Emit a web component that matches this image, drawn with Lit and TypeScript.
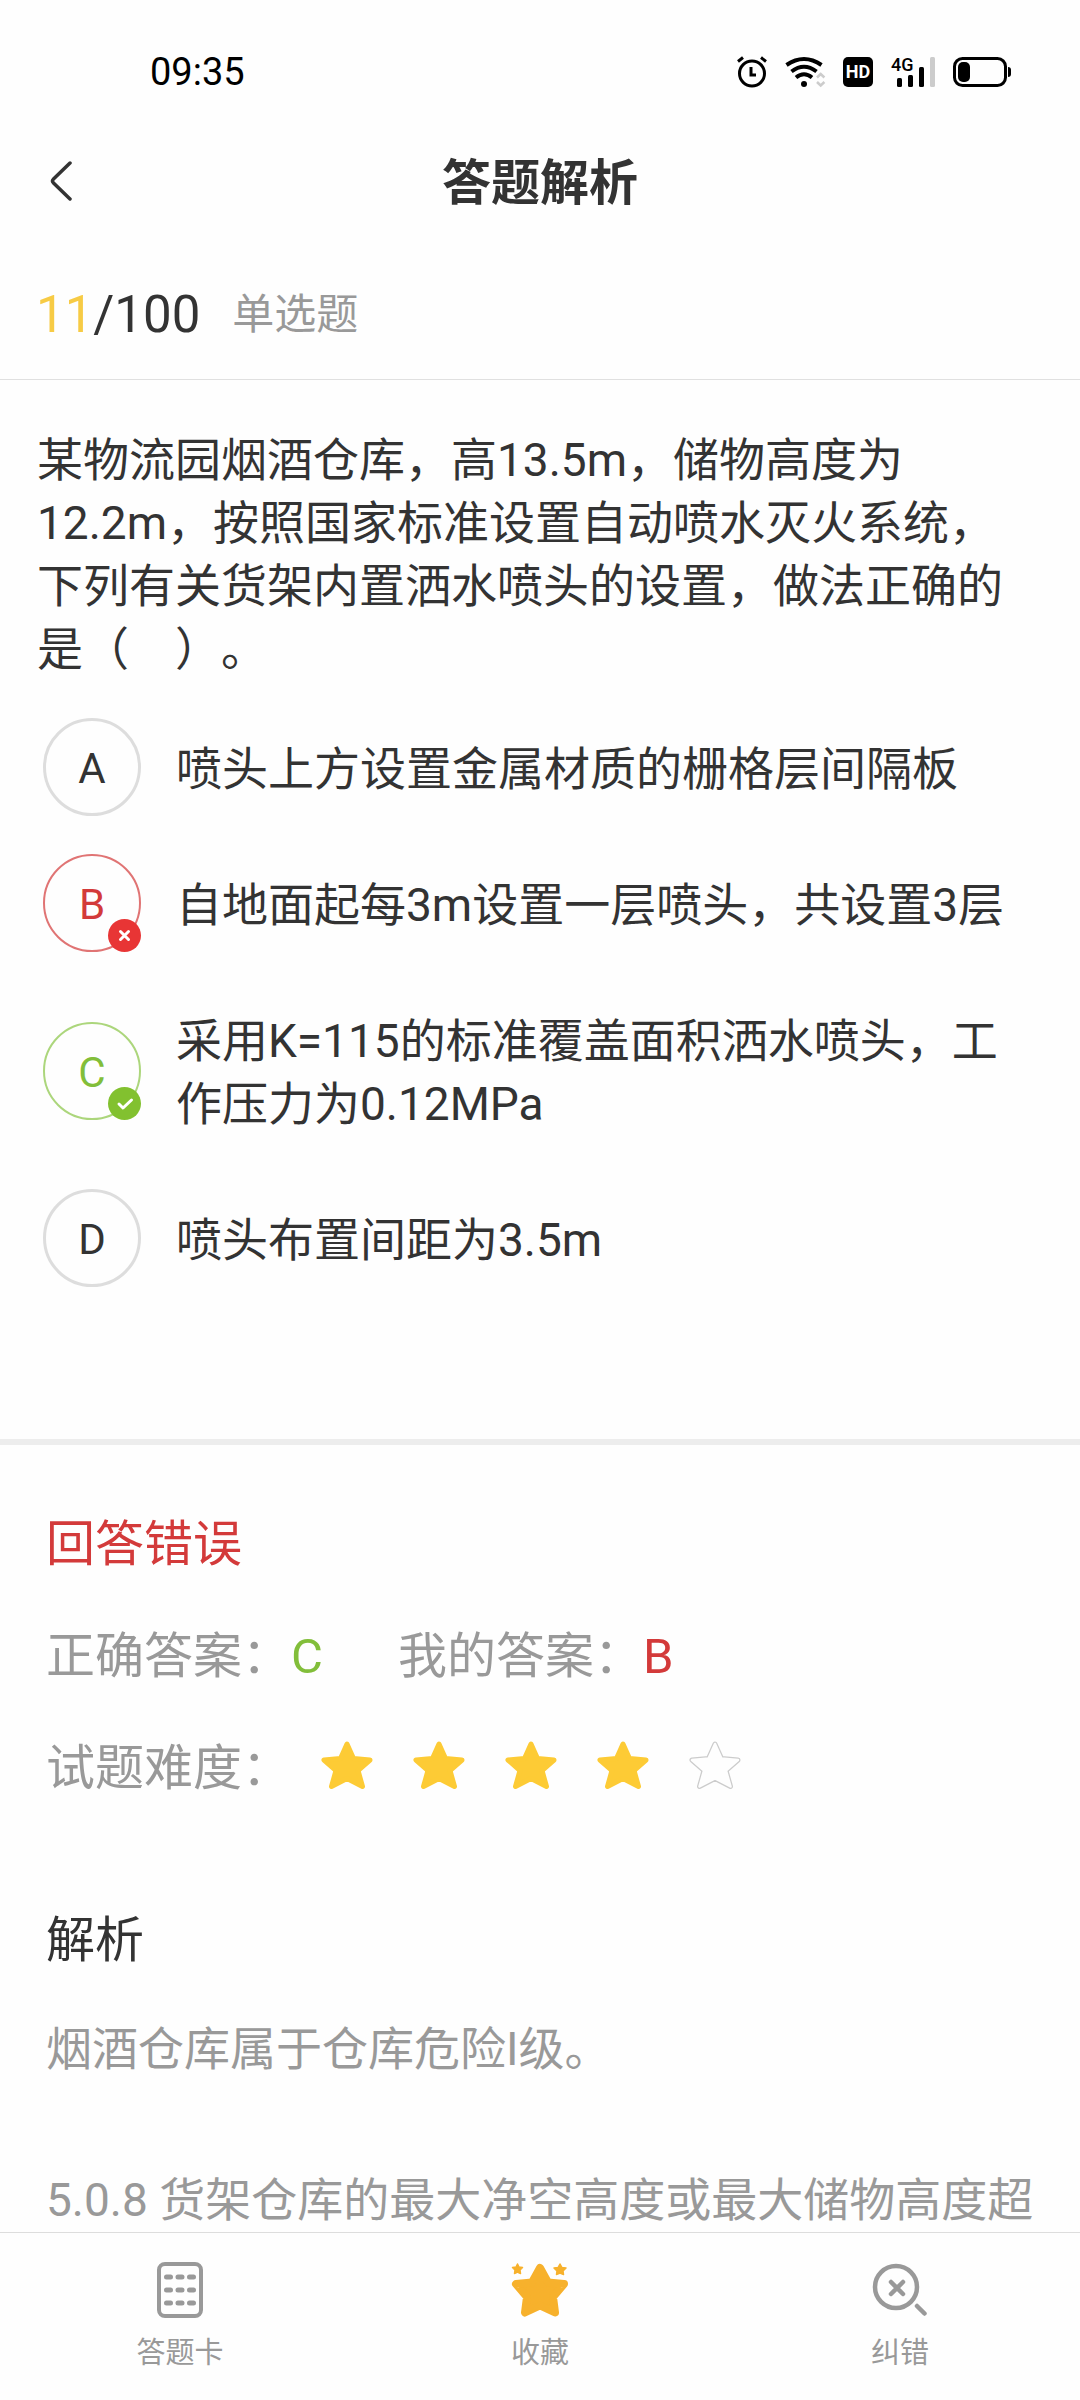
import { LitElement, html, css, svg, nothing } from "lit";
import { customElement, property } from "lit/decorators.js";
import { classMap } from "lit/directives/class-map.js";

type OptionState = "plain" | "wrong" | "right";

interface Option {
  key: string;
  text: string;
  state: OptionState;
}

const OPTIONS: Option[] = [
  { key: "A", text: "喷头上方设置金属材质的栅格层间隔板", state: "plain" },
  { key: "B", text: "自地面起每3m设置一层喷头，共设置3层", state: "wrong" },
  { key: "C", text: "采用K=115的标准覆盖面积洒水喷头，工作压力为0.12MPa", state: "right" },
  { key: "D", text: "喷头布置间距为3.5m", state: "plain" },
];

const STAR = "M25 3 L31.5 17.5 L48 19 L36 29.5 L40.5 45.5 L25 37.5 L9.5 45.5 L14 29.5 L2 19 L18.5 17.5 Z";

@customElement("status-bar")
export class StatusBar extends LitElement {
  static styles = css`
    :host {
      display: flex;
      align-items: center;
      justify-content: space-between;
      height: 144px;
      padding: 0 69px 0 150px;
      color: #000;
    }
    .time {
      font-size: 38px;
      line-height: 44px;
    }
    .icons {
      display: flex;
      align-items: center;
      gap: 18px;
    }
    svg {
      display: block;
      overflow: visible;
    }
    .hd {
      width: 30px;
      height: 30px;
      border-radius: 5px;
      background: #000;
      color: #fff;
      font: 700 18px/30px Roboto, sans-serif;
      text-align: center;
    }
    .net {
      font: 500 18px Roboto, sans-serif;
    }
  `;

  render() {
    return html`
      <span class="time">09:35</span>
      <div class="icons">
        <svg width="30" height="32" viewBox="0 0 30 32" fill="none" stroke="#000" stroke-width="3">
          <circle cx="15" cy="17.5" r="12.5" />
          <path d="M14 11v8h5M1 5.5l5-4M24 1.5l5 4" />
        </svg>
        <svg width="40" height="30" viewBox="0 0 40 30" fill="none" stroke="#000" stroke-width="4">
          <path d="M1.5 8Q19-4 36.5 8M6.5 14.5Q19 5 31.5 14.5M11 20.5Q19 14 27 20.5" />
          <circle cx="19" cy="27" r="3" fill="#000" stroke="none" />
          <path d="M32 20.5l3.7-3.5 3.7 3.5M32 25l3.7 3.5 3.7-3.5" stroke="#ccc" stroke-width="2.5" />
        </svg>
        <span class="hd">HD</span>
        <svg width="44" height="30" viewBox="0 0 44 30">
          <text class="net" x="0" y="14">4G</text>
          <rect x="6" y="21" width="5" height="9" rx="1.5" />
          <rect x="17" y="18" width="5" height="12" rx="1.5" />
          <rect x="28" y="10" width="5" height="20" rx="1.5" />
          <rect x="39" y="0" width="5" height="30" rx="1.5" fill="#ccc" />
        </svg>
        <svg width="58" height="30" viewBox="0 0 58 30">
          <rect x="1.5" y="1.5" width="51" height="27" rx="8" fill="none" stroke="#000" stroke-width="3" />
          <rect x="5" y="5" width="12" height="20" rx="5" />
          <path d="M55 10q3 0 3 3v4q0 3-3 3z" />
        </svg>
      </div>
    `;
  }
}

@customElement("answer-option")
export class AnswerOption extends LitElement {
  @property({ attribute: false }) option!: Option;

  static styles = css`
    :host {
      display: block;
    }
    .row {
      display: flex;
      align-items: center;
      gap: 35px;
      width: 100%;
      margin: 0;
      padding: 0;
      border: 0;
      background: none;
      color: inherit;
      font: inherit;
      text-align: left;
      cursor: pointer;
    }
    .mark {
      position: relative;
      flex: none;
      box-sizing: border-box;
      width: 98px;
      height: 98px;
      border: 3px solid #ddd;
      border-radius: 50%;
      font-size: 42px;
      line-height: 96px;
      text-align: center;
    }
    .wrong {
      border: 2px solid #e07474;
      color: #d33a3a;
      line-height: 98px;
    }
    .right {
      border: 2px solid #acd67c;
      color: #82be3a;
      line-height: 98px;
    }
    .badge {
      position: absolute;
      right: -2px;
      bottom: -2px;
      display: block;
    }
    .text {
      flex: 1;
      padding: 20px 0 15px;
    }
  `;

  private badge(state: OptionState) {
    if (state === "plain") return nothing;
    const wrong = state === "wrong";
    return html`
      <svg class="badge" width="33" height="33" viewBox="0 0 33 33" fill="none" stroke="#fff" stroke-width="3" stroke-linecap="round" stroke-linejoin="round">
        <circle cx="16.5" cy="16.5" r="16.5" fill=${wrong ? "#e83535" : "#82c12f"} stroke="none" />
        ${wrong
          ? svg`<path d="M12.5 12.5l8 8M20.5 12.5l-8 8" />`
          : svg`<path d="M11 17l4 4 8.5-8" />`}
      </svg>
    `;
  }

  render() {
    const { key, text, state } = this.option;
    return html`
      <button class="row" type="button">
        <span class=${classMap({ mark: true, wrong: state === "wrong", right: state === "right" })}>${key}${this.badge(state)}</span>
        <span class="text">${text}</span>
      </button>
    `;
  }
}

@customElement("app-root")
export class AppRoot extends LitElement {
  static styles = css`
    :host {
      display: flex;
      flex-direction: column;
      min-height: 100vh;
      background: #fefefe;
      color: #333;
      font-family: Roboto, "Noto Sans CJK SC", sans-serif;
      font-size: 46px;
      line-height: 63px;
      text-spacing-trim: space-all;
    }
    svg {
      display: block;
    }
    button {
      margin: 0;
      padding: 0;
      border: 0;
      background: none;
      color: inherit;
      font: inherit;
      cursor: pointer;
    }
    h1,
    h2,
    p,
    ol,
    dl,
    dd {
      margin: 0;
      padding: 0;
    }
    .nav {
      display: grid;
      grid-template-columns: 74px 1fr 74px;
      align-items: center;
      height: 74px;
      padding: 0 24px;
    }
    .back {
      display: flex;
      align-items: center;
      justify-content: center;
      height: 74px;
    }
    .title {
      padding-top: 4px;
      font-size: 49px;
      font-weight: 700;
      text-align: center;
    }
    .progress {
      display: flex;
      align-items: center;
      gap: 32px;
      margin-top: 32px;
      padding: 33px 36px;
      border-bottom: 1px solid #e0e0e0;
    }
    .count {
      font-size: 51px;
    }
    .current {
      color: #f7cb45;
    }
    .kind {
      color: #999;
      font-size: 42px;
    }
    .question {
      padding: 49px 45px 37px 37px;
    }
    .options {
      display: flex;
      flex-direction: column;
      gap: 38px;
      padding: 0 37px 152px 43px;
      border-bottom: 6px solid #ededed;
      list-style: none;
    }
    .result {
      display: flex;
      flex-direction: column;
      gap: 49px;
      padding: 68px 46px 0;
      color: #999;
      font-size: 49px;
    }
    .verdict,
    .bad {
      color: #d33a3a;
    }
    .verdict {
      font-size: 49px;
      font-weight: 400;
    }
    .good {
      color: #82be3a;
    }
    .facts {
      display: flex;
      gap: 75px;
    }
    .fact {
      display: flex;
      align-items: center;
    }
    .stars {
      display: flex;
      gap: 42px;
      padding: 0 0 8px 31px;
    }
    .analysis {
      flex: 1;
      padding: 109px 46px 0;
      color: #999;
    }
    .heading {
      margin-bottom: 46px;
      color: #333;
      font-size: 49px;
      font-weight: 400;
    }
    .para + .para {
      margin-top: 88px;
    }
    .tabs {
      display: grid;
      grid-template-columns: repeat(3, 1fr);
      box-sizing: border-box;
      height: 168px;
      border-top: 1px solid #ddd;
      background: #fefefe;
    }
    .tab {
      display: flex;
      flex-direction: column;
      align-items: center;
      gap: 14px;
      padding-top: 28px;
      color: #999;
      font-size: 29px;
      line-height: 40px;
    }
  `;

  private star(filled: boolean) {
    return html`
      <svg width="50" height="48" viewBox="0 0 50 48" stroke-linejoin="round" overflow="visible">
        <path d=${STAR} fill=${filled ? "#fdcb35" : "#ccc"} stroke=${filled ? "#fdcb35" : "#ccc"} stroke-width="5" />
        ${filled ? nothing : svg`<path d=${STAR} fill="#fefefe" stroke="#fefefe" stroke-width="2.5" />`}
      </svg>
    `;
  }

  render() {
    return html`
      <status-bar></status-bar>
      <header class="nav">
        <button class="back" type="button" aria-label="返回">
          <svg width="24" height="40" viewBox="0 0 24 40" fill="none" stroke="#333" stroke-width="3.5" stroke-linecap="round" stroke-linejoin="round">
            <path d="M21 2L4.5 18Q2.5 20 4.5 22L21 38" />
          </svg>
        </button>
        <h1 class="title">答题解析</h1>
      </header>
      <div class="progress">
        <span class="count"><span class="current">11</span>/100</span>
        <span class="kind">单选题</span>
      </div>
      <p class="question">某物流园烟酒仓库，高13.5m，储物高度为12.2m，按照国家标准设置自动喷水灭火系统，下列有关货架内置洒水喷头的设置，做法正确的是（\u3000）。</p>
      <ol class="options">
        ${OPTIONS.map((o) => html`<li><answer-option .option=${o}></answer-option></li>`)}
      </ol>
      <section class="result">
        <h2 class="verdict">回答错误</h2>
        <dl class="facts">
          <div class="fact"><dt>正确答案：</dt><dd class="good">C</dd></div>
          <div class="fact"><dt>我的答案：</dt><dd class="bad">B</dd></div>
        </dl>
        <div class="fact">
          <span>试题难度：</span>
          <div class="stars" role="img" aria-label="4/5">${[1, 2, 3, 4, 5].map((n) => this.star(n <= 4))}</div>
        </div>
      </section>
      <section class="analysis">
        <h2 class="heading">解析</h2>
        <p class="para">烟酒仓库属于仓库危险I级。</p>
        <p class="para">5.0.8 货架仓库的最大净空高度或最大储物高度超</p>
      </section>
      <nav class="tabs">
        <button class="tab" type="button">
          <svg width="48" height="58" viewBox="0 0 48 58" fill="none" stroke="#999" stroke-width="4">
            <rect x="3" y="3" width="42" height="52" rx="6" />
            <path d="M10.5 16h4M22 16h4M33.500 16h4M10.500 29h4M22 29h4M33.500 29h4M10.500 42h4M22 42h4M33.500 42h4" stroke-width="5" stroke-linecap="round" />
          </svg>
          <span>答题卡</span>
        </button>
        <button class="tab" type="button">
          <svg width="58" height="58" viewBox="0 0 58 58" fill="#f7b12c" stroke="#f7b12c" stroke-linejoin="round">
            <path d="M29 7L37 21.5L53 23L42 36L44 51.5L29 44.5L14 51.5L16 36L5 23L21 21.5Z" stroke-width="8" />
            <path d="M6.5 3l1.5 3 3.5.5-2.5 2.5.5 3.5-3-1.5-3 1.5.5-3.5-2.5-2.5 3.5-.5zM49 3l2 3.5 4 .5-3 3 .5 3.5-3.5-1.5-3.5 1.5.5-3.5-3-3 4-.5z" stroke-width="1.5" />
          </svg>
          <span>收藏</span>
        </button>
        <button class="tab" type="button">
          <svg width="58" height="58" viewBox="0 0 58 58" fill="none" stroke="#999" stroke-width="4.5" stroke-linecap="round">
            <circle cx="25" cy="26" r="21" />
            <path d="M20 21l12 12M32 21l-12 12M46 45l7.5 7.5" />
          </svg>
          <span>纠错</span>
        </button>
      </nav>
    `;
  }
}
